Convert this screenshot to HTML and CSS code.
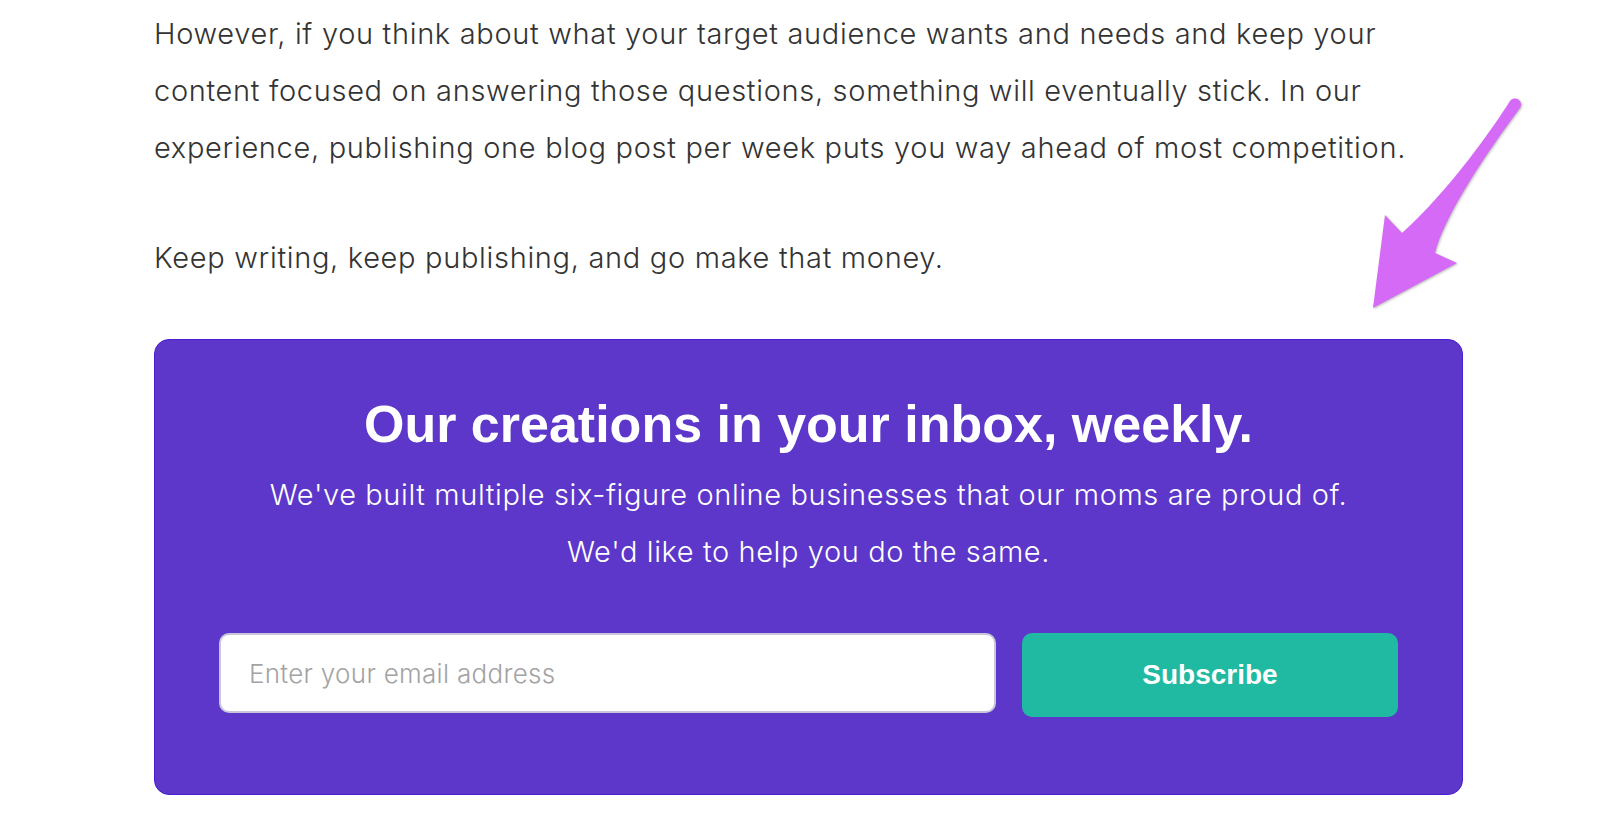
FILE: index.html
```html
<!DOCTYPE html>
<html lang="en">
<head>
    <meta charset="UTF-8">
    <title>Keep writing</title>
    <link rel="stylesheet" href="styles.css">
</head>
<body>
<div class="post">
    <p>However, if you think about what your target audience wants and needs and keep your content focused on answering those questions, something will eventually stick. In our experience, publishing one blog post per week puts you way ahead of most competition.</p>
    <p>Keep writing, keep publishing, and go make that money.</p>

    <!-- Newsletter box -->
    <div class="signup">
        <h2>Our creations in your inbox, weekly.</h2>
        <p class="signup-text">We've built multiple six-figure online businesses that our moms are proud of.<br>We'd like to help you do the same.</p>
        <form class="signup-form" onsubmit="return false">
            <input type="email" class="email" placeholder="Enter your email address">
            <button type="submit" class="subscribe">Subscribe</button>
        </form>
    </div>
</div>

<svg class="arrow" width="170" height="230" viewBox="0 0 170 230">
    <path d="M150 11 C135 35 90 100 42 143 L25 125 L13 218 L97 173 L75 163 C85 125 125 65 160 18 A5.5 5.5 0 0 0 150 11 Z" fill="#d56af6"/>
</svg>
</body>
</html>
```

FILE: styles.css
```css
body {
    margin: 0;
    background-color: #ffffff;
    font-family: Inter, "Liberation Sans", sans-serif;
    font-weight: 300;
    color: #333333;
}
.post {
    width: 1309px;
    margin-left: 154px;
    padding-top: 5px;
}
.post p {
    margin: 0 0 53px 0;
    font-size: 29px;
    line-height: 57px;
    letter-spacing: 0.68px;
}
.signup {
    background-color: #5c37c9;
    border: 1px solid #4a1dd2;
    border-radius: 15px;
    padding: 54px 64px 77px 64px;
    text-align: center;
    color: #ffffff;
}
.signup h2 {
    margin: 0;
    font-family: "Liberation Sans", Arial, sans-serif;
    font-weight: bold;
    font-size: 52px;
    line-height: 60px;
}
.post .signup-text {
    margin: 12px 0 53px 0;
    letter-spacing: 0.6px;
}
.signup-form {
    display: flex;
    align-items: flex-start;
    gap: 26px;
}
.email {
    flex: 1;
    height: 80px;
    box-sizing: border-box;
    border: 2px solid #c9c6dc;
    border-radius: 10px;
    padding: 0 28px;
    font-family: Inter, "Liberation Sans", sans-serif;
    font-weight: 300;
    font-size: 26px;
    letter-spacing: 0.3px;
    color: #333333;
}
.email::placeholder {
    color: #a3a3a3;
}
.subscribe {
    width: 376px;
    height: 84px;
    border: none;
    border-radius: 10px;
    background-color: #20b9a1;
    color: #ffffff;
    font-family: "Liberation Sans", Arial, sans-serif;
    font-weight: bold;
    font-size: 28px;
}
.arrow {
    position: absolute;
    left: 1360px;
    top: 90px;
    filter: drop-shadow(1px 1px 1px rgba(0, 0, 0, 0.25));
}
```
